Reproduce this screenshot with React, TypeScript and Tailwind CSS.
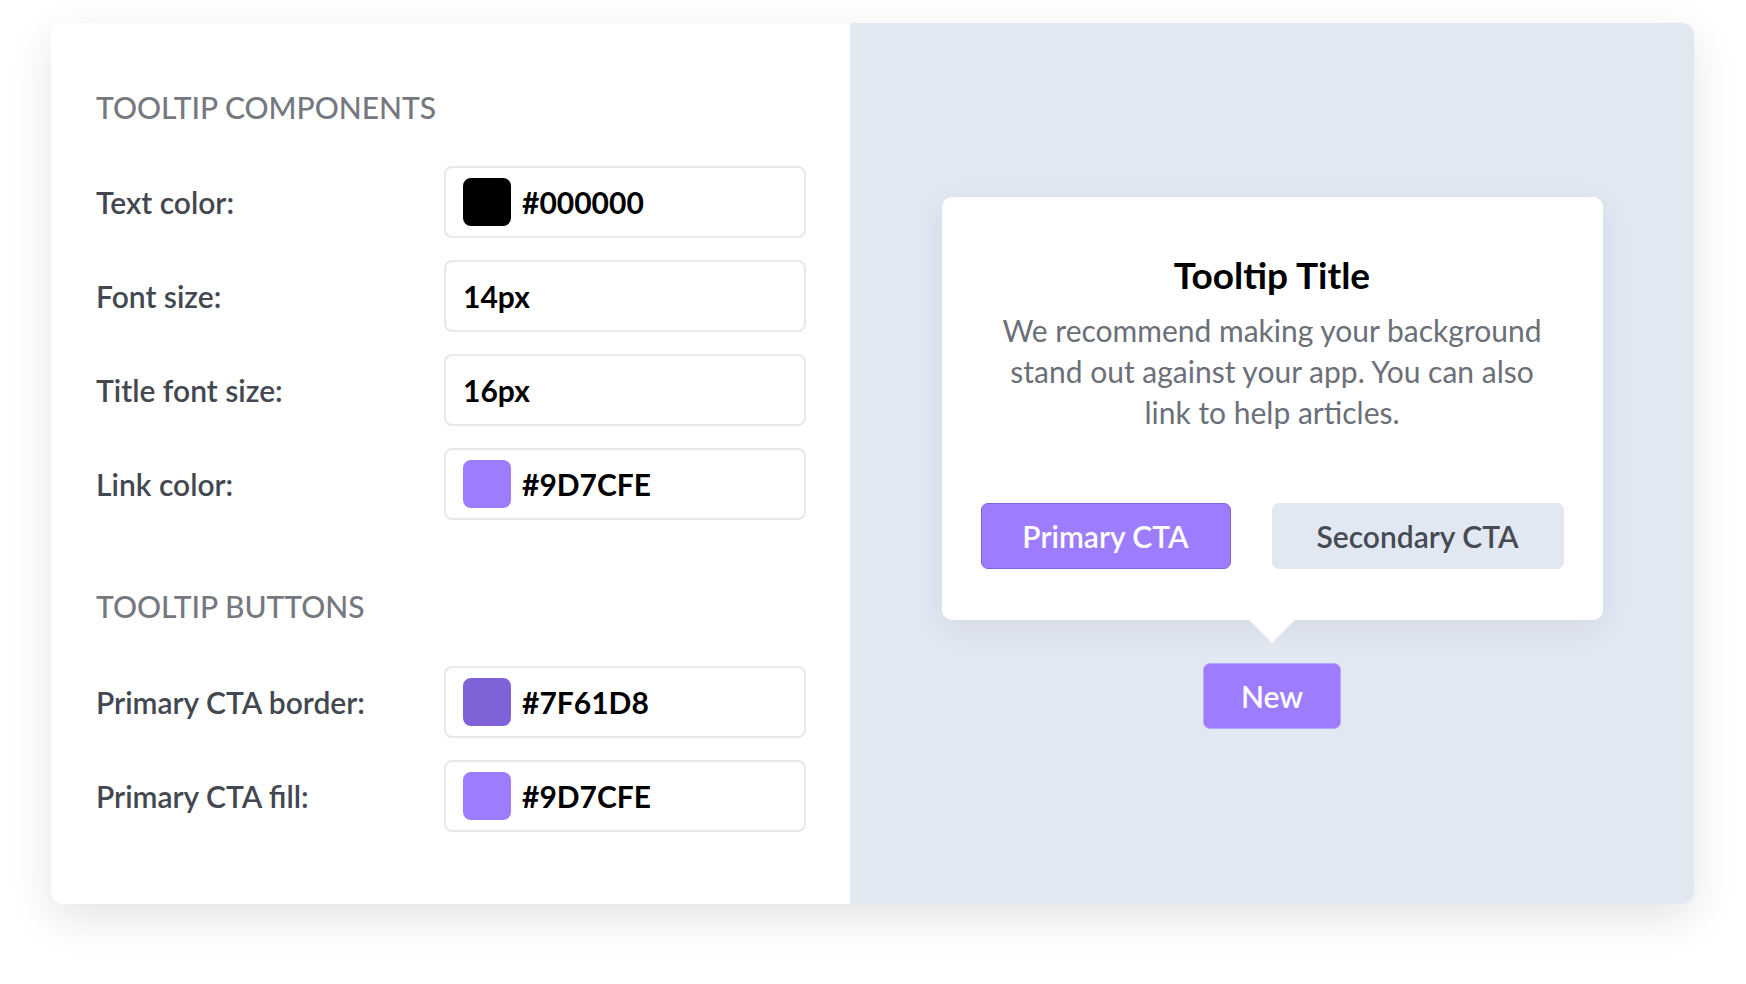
const font = { fontFamily: "Lato, 'Noto Sans', sans-serif" };

type Field = { label: string; value: string; swatch?: string };

const components: Field[] = [
  { label: "Text color:", value: "#000000", swatch: "#000000" },
  { label: "Font size:", value: "14px" },
  { label: "Title font size:", value: "16px" },
  { label: "Link color:", value: "#9D7CFE", swatch: "#9D7CFE" },
];

const buttons: Field[] = [
  { label: "Primary CTA border:", value: "#7F61D8", swatch: "#7F61D8" },
  { label: "Primary CTA fill:", value: "#9D7CFE", swatch: "#9D7CFE" },
];

function FieldRow({ label, value, swatch }: Field) {
  return (
    <div className="flex items-center">
      <span className="w-[348px] text-[30px] font-semibold leading-[36px] text-[#434850]">{label}</span>
      <div className="flex h-[72px] w-[362px] items-center gap-[11px] rounded-[8px] border-2 border-[#e8e8ea] bg-white pl-[17px]">
        {swatch && <span className="h-[48px] w-[48px] rounded-[8px]" style={{ backgroundColor: swatch }} />}
        <span className="text-[30px] font-bold leading-[36px] text-black">{value}</span>
      </div>
    </div>
  );
}

function Heading({ children }: { children: string }) {
  return <h2 className="text-[30px] font-medium leading-[36px] text-[#76787f]">{children}</h2>;
}

export default function App() {
  return (
    <div className="h-[984px] w-full bg-white pl-[51px] pt-[23px]" style={font}>
      <div className="flex h-[881px] w-[1643px] overflow-hidden rounded-[12px] shadow-[0_14px_44px_rgba(0,0,0,0.11)]">
        {/* settings column */}
        <div className="flex w-[799px] flex-col bg-white pl-[45px] pt-[66px]">
          <Heading>TOOLTIP COMPONENTS</Heading>
          <div className="mt-[41px] flex flex-col gap-[22px]">
            {components.map((f) => (
              <FieldRow key={f.label} {...f} />
            ))}
          </div>
          <div className="mt-[68px]">
            <Heading>TOOLTIP BUTTONS</Heading>
          </div>
          <div className="mt-[42px] flex flex-col gap-[22px]">
            {buttons.map((f) => (
              <FieldRow key={f.label} {...f} />
            ))}
          </div>
        </div>

        {/* preview */}
        <div className="flex flex-1 flex-col items-center bg-[#e2e8f2] pt-[174px]">
          <div className="flex w-[661px] flex-col items-center rounded-[10px] bg-white pb-[51px] pt-[56px] shadow-[0_8px_30px_rgba(30,40,70,0.07)]">
            <h3 className="text-[37px] font-bold leading-[44px] text-black">Tooltip Title</h3>
            <p className="mt-[13px] w-[560px] text-center text-[30px] leading-[41px] text-[#6b6f78]">
              We recommend making your background stand out against your app. You can also link to help articles.
            </p>
            <div className="mt-[70px] flex gap-[41px]">
              <button className="h-[66px] w-[250px] rounded-[7px] border border-[#7f61d8] bg-[#9d7cfe] text-[30px] font-semibold text-white">
                Primary CTA
              </button>
              <button className="h-[66px] w-[292px] rounded-[7px] bg-[#e2e8f2] text-[30px] font-semibold text-[#464a52]">
                Secondary CTA
              </button>
            </div>
          </div>
          <svg width="48" height="24" viewBox="0 0 48 24" className="-mt-px">
            <polygon points="0,0 48,0 24,24" fill="#ffffff" />
          </svg>
          <button className="mt-[20px] h-[66px] w-[138px] rounded-[7px] border border-[#b9a6fb] bg-[#9d7cfe] text-[30px] font-semibold text-white">
            New
          </button>
        </div>
      </div>
    </div>
  );
}
